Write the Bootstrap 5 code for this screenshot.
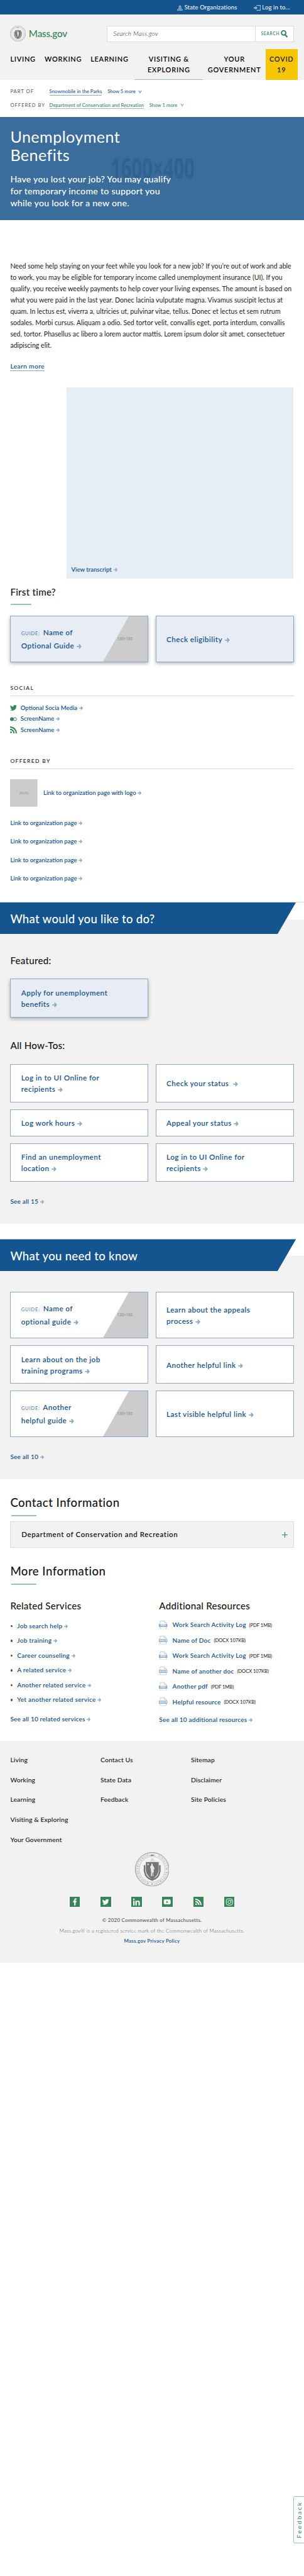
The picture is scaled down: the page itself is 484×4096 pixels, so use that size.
<!DOCTYPE html>
<html lang="en">
<head>
<meta charset="utf-8">
<meta name="viewport" content="width=device-width, initial-scale=1">
<title>Unemployment Benefits | Mass.gov</title>
<link href="https://cdn.jsdelivr.net/npm/bootstrap@5.3.0/dist/css/bootstrap.min.css" rel="stylesheet">
<style>
/* 1rem = 10 design units */
html{font-size:5.46px}
body{font-family:Lato,"Open Sans",sans-serif;font-size:1.8rem;color:#141414;background:#fff;min-height:100vh;position:relative;overflow-x:hidden}
a{color:#14558f;text-decoration:none}
ul{list-style:none;margin:0;padding:0}
h1,h2,h3,p{margin:0}
.page-pad{padding-left:3rem;padding-right:3rem}
.arr{width:1.5rem;height:1.4rem;fill:#8aaac8;margin-left:.65rem;vertical-align:-.05em}
.arr-sm{width:1.15rem;height:1.1rem;margin-left:.5rem;vertical-align:0}
.topbar{height:4.3rem;background:#14558f;color:#fff;gap:4.8rem;padding:.2rem 4.1rem 0 0;font-size:1.75rem;letter-spacing:.02rem}
.topbar svg{fill:#a1bbd2}
.masthead{height:19rem;background:#f2f2f2;padding-top:3.3rem}
.brand-row{height:4.6rem}
.brand-name{font-size:2.8rem;line-height:1;color:#388557;font-weight:500;margin-left:.8rem;letter-spacing:-.04rem}
.seal{width:4.6rem;height:4.6rem}
.finder{width:54.6rem;height:4.6rem;background:#fff;border:.2rem solid #dcdcdc}
.finder .hint{font-style:italic;font-size:1.85rem;padding-left:1.8rem;color:#141414;font-weight:300;letter-spacing:.04rem}
.finder .go{width:11.1rem;border-left:.2rem solid #dcdcdc;color:#388557;font-size:1.2rem;font-weight:600;letter-spacing:.143rem}
.mainnav{height:9rem;margin-top:2.1rem;padding-left:3rem;display:grid;grid-template-columns:10rem 13.4rem 12.8rem 20.1rem 18.1rem 9.4rem;font-size:2rem;line-height:3.1rem;font-weight:600;letter-spacing:.145rem;color:#000}
.mainnav li{padding-top:1.45rem;white-space:nowrap}
.mainnav .on{position:relative}
.mainnav .on::after{content:"";position:absolute;left:0;right:0;bottom:0;height:.3rem;background:#94bfa3;clip-path:polygon(.2rem 0,100% 0,99.2% 100%,0 100%)}
.mainnav .hot{background:#f6c600;color:#222}
.crumbs{height:10.8rem;padding-top:1.5rem;line-height:3.9rem;font-size:1.4rem;font-weight:500;letter-spacing:.01rem}
.crumbs .lab{width:11.4rem;color:#535353;font-weight:400;letter-spacing:.185rem}
.crumbs u{text-decoration:none;border-bottom:.15rem solid #8aaac8;padding-bottom:.05rem}
.crumbs .g,.crumbs .g a{color:#388557}
.crumbs .g u{border-color:#9ac4ab}
.crumbs .more{margin-left:1.6rem}
.crumbs svg{width:1.1rem;height:.9rem;margin-left:.8rem;fill:#8aaac8}
.crumbs .g svg{fill:#9ac4ab}
.hero{height:30rem;background:#3a6d9c;color:#fff;padding-top:3rem}
.hero h1{font-size:4.6rem;line-height:5.4rem;font-weight:400;position:relative;letter-spacing:.08rem}
.hero p{font-size:2.6rem;line-height:3.5rem;margin-top:2.4rem;font-weight:500;position:relative;letter-spacing:.043rem}
.ghost{position:absolute;left:32rem;top:11rem;width:25rem;height:8rem;overflow:visible}
.intro{font-size:1.95rem;line-height:3.3rem;margin-top:11.8rem;color:#222;white-space:nowrap}
.learn{font-size:1.9rem;line-height:2.6rem;border-bottom:.15rem solid #8aaac8;margin-top:3rem;font-weight:600;letter-spacing:.053rem}
.video{margin:4.8rem 0 0 16.5rem;width:66.1rem;height:55.7rem;background:#e6edf5;padding:0 0 1.6rem 1.3rem;font-size:1.75rem;line-height:2.4rem;font-weight:600}
.h-bar::after{content:"";display:block;height:.3rem;background:#9ac4ab;width:6rem;margin:1.47rem 0 0 .15rem;transform:skewX(-20deg)}
.h-sm{font-size:2.78rem;line-height:3.6rem;font-weight:500;letter-spacing:.045rem}
.h-lg{font-size:3.4rem;line-height:4.4rem;font-weight:500;letter-spacing:.09rem}
.h-lg.h-bar::after{width:7.4rem;margin-left:.3rem}
.tiles{display:grid;grid-template-columns:1fr 1fr;column-gap:2.1rem;row-gap:2rem}
.tile{border:.3rem solid #8aaac8;background:#fff;font-size:2.15rem;line-height:3.3rem;font-weight:600;padding:0 3rem;color:#14558f;position:relative;letter-spacing:.075rem}
.lift{background:#e7ecf5;box-shadow:0 .5rem 1rem rgba(0,0,0,.3)}
.guide{line-height:3.5rem;padding-right:15rem}
.guide small{font-size:1.4rem;font-weight:400;letter-spacing:.14rem;color:#4377a5;margin-right:.3rem}
.pic{position:absolute;right:0;top:0;bottom:0;width:13rem;height:100%}
.cap{font-size:1.55rem;line-height:2rem;letter-spacing:.25rem;font-weight:500;border-bottom:.25rem solid #dcdcdc;padding-bottom:1.15rem;margin-top:6.5rem}
.social{font-size:1.75rem;line-height:3.2rem;font-weight:600;padding-top:1.8rem}
.social .ico{width:2rem;height:2rem;fill:#388557;margin-right:1rem}
.orgs{font-size:1.75rem;line-height:5.4rem;font-weight:600;padding-top:2rem}
.logo-box{width:8rem;height:8rem}
.banded{background:linear-gradient(#fff 5rem,#f2f2f2 5rem)}
.ribbon{height:9.3rem;background:#14558f;color:#fff;clip-path:polygon(0 0,86.3rem 0,80.9rem 100%,0 100%);font-size:3.4rem;font-weight:500;padding-top:.3rem;letter-spacing:.055rem}
.seeall{font-size:1.85rem;line-height:2.4rem;font-weight:600;letter-spacing:.03rem}
.acc{height:7.7rem;border:.25rem solid #dcdcdc;background:#f2f2f2;font-size:2.1rem;font-weight:600;padding:0 1.6rem 0 3.1rem;margin-top:1.6rem;letter-spacing:.115rem}
.rel{font-size:1.85rem;line-height:4.3rem;font-weight:600;padding-top:1.8rem;letter-spacing:.043rem}
.rel li::before{content:"";width:.6rem;height:.6rem;border-radius:50%;background:#535353;margin:0 1.25rem 0 .15rem}
.res{font-size:1.85rem;line-height:4.5rem;font-weight:600;padding-top:1.3rem;letter-spacing:.038rem}
.res .ico{width:2.5rem;height:2.5rem;margin-right:1.4rem}
.res span{font-size:1.4rem;font-weight:400;margin-left:.9rem;position:relative;top:.1rem;color:#141414;letter-spacing:-.01rem}
.foot{background:#f2f2f2;height:64.6rem;margin-top:4.9rem;padding-top:2.7rem}
.foot .cols{display:grid;grid-template-columns:26.3rem 26.4rem 1fr;font-size:1.9rem;line-height:5.8rem;height:29.7rem;font-weight:500;letter-spacing:.022rem}
.foot .seal{width:10rem;height:10rem}
.sq{width:3rem;height:3rem;background:#388557;fill:#fff}
.legal{font-size:1.45rem;line-height:3.05rem;margin-top:2.3rem;color:#535353;font-weight:500;letter-spacing:.05rem}
.fb{position:absolute;right:-.3rem;top:726.9rem;width:3.4rem;height:13.8rem;border:.35rem solid #9ac4ab;border-radius:.4rem 0 0 .4rem;color:#388557;writing-mode:vertical-rl;font-size:1.8rem;letter-spacing:.41rem;background:#fff}
.fb span{transform:rotate(180deg)}
</style>
</head>
<body>
<svg class="d-none">
<symbol id="ar" viewBox="0 0 14 14"><path d="M0 5.300h7.500L5.300 1.800 7.600 0 14 7 7.600 14 5.300 12.200 7.500 8.700H0z"/></symbol>
<symbol id="chev" viewBox="0 0 12 10"><path d="M0 0h3.200L6 4.200 8.800 0H12L6 10z"/></symbol>
<symbol id="tw" viewBox="0 0 24 24"><path d="M24 4.600a10 10 0 0 1-2.800.800 5 5 0 0 0 2.200-2.700 10 10 0 0 1-3.100 1.200 4.900 4.900 0 0 0-8.400 4.500A14 14 0 0 1 1.700 3.200a4.900 4.900 0 0 0 1.500 6.600 5 5 0 0 1-2.200-.6 4.900 4.900 0 0 0 3.900 4.900 5 5 0 0 1-2.200.1 4.900 4.900 0 0 0 4.600 3.400A9.900 9.900 0 0 1 0 19.600 14 14 0 0 0 21.500 7.100 10 10 0 0 0 24 4.600z"/></symbol>
<symbol id="fl" viewBox="0 0 20 20"><circle cx="5.500" cy="10" r="5.500"/><circle cx="14.500" cy="10" r="4.600" fill="none" stroke="#388557" stroke-width="1.800"/></symbol>
<symbol id="rss" viewBox="0 0 20 20"><circle cx="2.800" cy="17.200" r="2.700"/><path d="M0 6.800v3.700A9.500 9.500 0 0 1 9.500 20h3.700A13.200 13.200 0 0 0 0 6.800zM0 0v3.800A16.200 16.200 0 0 1 16.200 20H20A20 20 0 0 0 0 0z"/></symbol>
<symbol id="seal" viewBox="0 0 100 100"><g fill="none" stroke="#767676"><circle cx="50" cy="50" r="49.300" stroke-width="1.200"/><circle cx="50" cy="50" r="47.300" stroke-width=".6"/><circle cx="50" cy="50" r="37.500" stroke-width="1.100" stroke-dasharray="1 .6"/></g><path id="ringt" d="M50 9.800A40.200 40.200 0 1 1 49.990 9.800" fill="none"/><text font-family="Liberation Serif" font-size="7.600" fill="#767676"><textPath href="#ringt" startOffset="17" textLength="228" lengthAdjust="spacing">SIGILLUM REIPUBLICÆ MASSACHUSETTENSIS.</textPath></text><path d="M41 8.500h5v-1h8v1h5v1h-5v1.200h-8V9.500h-5z" fill="#767676"/><path d="M31.500 29h37.500v22c0 12-9 23-19 28.500C40 74 31.500 63 31.500 51z" fill="#767676"/><path d="M27 38c3 8-2 14 2 22 1 8 8 17 21 21 13-4 20-13 21-21 4-8-1-14 2-22" fill="none" stroke="#767676" stroke-width="4.500"/><path d="M44 27l3-8 3-2 3 3 6 6z" fill="#d8d8d8"/><path d="M38 32l.9 2.300 2.500.1-2 1.600.7 2.400-2.100-1.400-2.100 1.400.7-2.400-2-1.600 2.500-.1zM48 33l3 1 1 5 4 6 1 4-2 1-1-2 1 9-2 3 1 10h-2l-1-11-1 1-1 10h-3l1-11-1-6v-8l-2 3v-5l3-4z" fill="#e9e9e9"/></symbol>
<symbol id="pdf" viewBox="0 0 25 25"><path d="M3.500 10V1h13l5 5v4M3.500 18v6h18v-6M16 1v5.500h5.500" fill="none" stroke="#8aaac8"/><path d="M0 9.500h25v9H0z" fill="#8aaac8"/><text x="4" y="17" font-family="Open Sans" font-weight="700" font-size="8.500" textLength="17" fill="#fff">PDF</text></symbol>
<symbol id="docx" viewBox="0 0 25 25"><path d="M3.500 10V1h13l5 5v4M3.500 18v6h18v-6M16 1v5.500h5.500" fill="none" stroke="#8aaac8"/><path d="M0 9.500h25v9H0z" fill="#8aaac8"/><text x="1.500" y="16.700" font-family="Open Sans" font-weight="700" font-size="7.500" textLength="22" lengthAdjust="spacingAndGlyphs" fill="#fff">DOCX</text></symbol>
</svg>

<div class="topbar d-flex justify-content-end align-items-center">
  <span class="d-flex align-items-center"><svg width="9" height="9" viewBox="0 0 16 16" class="me-2"><path d="M7.300 0h1.400v2C11 2.500 12 4 12 6H4c0-2 1-3.500 3.300-4zM3.500 7h9v1h-9zM4 8.500h2V11H4zm3 0h2V11H7zm3 0h2V11h-2zM0 11.500h16V13H0zM1 13h2v2h2v-2h2v2h2v-2h2v2h2v-2h2v2h1v1H0v-1h1z"/></svg>State Organizations</span>
  <span class="d-flex align-items-center"><svg width="11" height="9" viewBox="0 0 20 16" class="me-2"><path d="M0 6h5V2.500L11 8l-6 5.500V10H0zM8 0h12v16H8v-2h10V2H8z"/></svg>Log in to...</span>
</div>
<header class="masthead">
  <div class="brand-row page-pad d-flex justify-content-between align-items-center">
    <div class="d-flex align-items-center"><svg class="seal"><use href="#seal"/></svg><span class="brand-name">Mass.gov</span></div>
    <div class="finder d-flex align-items-stretch">
      <div class="hint flex-fill d-flex align-items-center">Search Mass.gov</div>
      <div class="go d-flex align-items-center justify-content-center">SEARCH<svg class="ms-1" width="11.500" height="11.500" viewBox="0 0 20 20" fill="none" stroke="#388557"><circle cx="8" cy="7.500" r="6" stroke-width="3.400"/><path d="M12 12.500l6 6.500" stroke-width="4"/></svg></div>
    </div>
  </div>
  <ul class="mainnav">
    <li>LIVING</li><li>WORKING</li><li>LEARNING</li>
    <li class="on text-center">VISITING &amp;<br>EXPLORING</li><li class="text-center">YOUR<br>GOVERNMENT</li><li class="hot text-center">COVID<br>19</li>
  </ul>
</header>
<div class="crumbs page-pad">
  <div class="d-flex"><span class="lab">PART OF</span><a href="#"><u>Snowmobile in the Parks</u></a><a href="#" class="more">Show 5 more<svg><use href="#chev"/></svg></a></div>
  <div class="d-flex g"><span class="lab">OFFERED BY</span><a href="#"><u>Department of Conservation and Recreation</u></a><a href="#" class="more">Show 1 more<svg><use href="#chev"/></svg></a></div>
</div>
<section class="hero page-pad position-relative">
  <svg class="ghost" viewBox="0 0 250 80"><text x="2" y="69" font-family="Open Sans" font-weight="700" font-size="81" textLength="245" lengthAdjust="spacingAndGlyphs" fill="#30628f">1600×400</text></svg>
  <h1>Unemployment<br>Benefits</h1>
  <p>Have you lost your job? You may qualify<br>for temporary income to support you<br>while you look for a new one.</p>
</section>
<main>
<div class="page-pad">
  <p class="intro">Need some help staying on your feet while you look for a new job? If you’re out of work and able<br>to work, you may be eligible for temporary income called unemployment insurance (UI). If you<br>qualify, you receive weekly payments to help cover your living expenses. The amount is based on<br>what you were paid in the last year. Donec lacinia vulputate magna. Vivamus suscipit lectus at<br>quam. In lectus est, viverra a, ultricies ut, pulvinar vitae, tellus. Donec et lectus et sem rutrum<br>sodales. Morbi cursus. Aliquam a odio. Sed tortor velit, convallis eget, porta interdum, convallis<br>sed, tortor. Phasellus ac libero a lorem auctor mattis. Lorem ipsum dolor sit amet, consectetuer<br>adipiscing elit.</p>
  <div class="d-flex"><a class="learn" href="#">Learn more</a></div>
  <div class="video d-flex align-items-end"><a href="#">View transcript<svg class="arr arr-sm"><use href="#ar"/></svg></a></div>
  <h2 class="h-sm h-bar" style="margin-top:2.2rem">First time?</h2>
  <div class="tiles" style="margin-top:3.2rem;grid-auto-rows:13.6rem">
    <a class="tile lift guide d-flex align-items-center" href="#"><div><small>GUIDE:</small> Name of<br>Optional Guide<svg class="arr"><use href="#ar"/></svg></div><svg class="pic" viewBox="0 0 130 130" preserveAspectRatio="none"><path d="M75 0h55v130H0z" fill="#ccc"/><text x="41" y="69" font-family="Open Sans" font-size="13" textLength="45" lengthAdjust="spacingAndGlyphs" fill="#969696">130×160</text></svg></a>
    <a class="tile lift d-flex align-items-center" href="#"><div>Check eligibility<svg class="arr"><use href="#ar"/></svg></div></a>
  </div>
  <h3 class="cap">SOCIAL</h3>
  <ul class="social">
    <li class="d-flex align-items-center"><svg class="ico"><use href="#tw"/></svg><a href="#">Optional Socia Media<svg class="arr arr-sm"><use href="#ar"/></svg></a></li>
    <li class="d-flex align-items-center"><svg class="ico"><use href="#fl"/></svg><a href="#">ScreenName<svg class="arr arr-sm"><use href="#ar"/></svg></a></li>
    <li class="d-flex align-items-center"><svg class="ico"><use href="#rss"/></svg><a href="#">ScreenName<svg class="arr arr-sm"><use href="#ar"/></svg></a></li>
  </ul>
  <h3 class="cap">OFFERED BY</h3>
  <div class="d-flex align-items-center social" style="padding-top:3rem"><svg class="logo-box" viewBox="0 0 80 80"><path d="M0 0h80v80H0z" fill="#ccc"/><text x="27" y="43.500" font-family="Open Sans" font-size="8.500" textLength="26" lengthAdjust="spacingAndGlyphs" fill="#969696">250×250</text></svg><a href="#" style="margin-left:1.65rem">Link to organization page with logo<svg class="arr arr-sm"><use href="#ar"/></svg></a></div>
  <ul class="orgs">
    <li><a href="#">Link to organization page<svg class="arr arr-sm"><use href="#ar"/></svg></a></li>
    <li><a href="#">Link to organization page<svg class="arr arr-sm"><use href="#ar"/></svg></a></li>
    <li><a href="#">Link to organization page<svg class="arr arr-sm"><use href="#ar"/></svg></a></li>
    <li><a href="#">Link to organization page<svg class="arr arr-sm"><use href="#ar"/></svg></a></li>
  </ul>
</div>
<section class="banded" style="margin-top:4rem;border-top:1px solid #dcdcdc">
  <h2 class="ribbon page-pad d-flex align-items-center">What would you like to do?</h2>
  <div class="page-pad">
    <h3 class="h-sm" style="margin-top:6rem">Featured:</h3>
    <div class="tiles" style="margin-top:3.4rem;grid-auto-rows:11.2rem"><a class="tile lift d-flex align-items-center" href="#"><div>Apply for unemployment<br>benefits<svg class="arr"><use href="#ar"/></svg></div></a></div>
    <h3 class="h-sm" style="margin-top:6.5rem">All How-Tos:</h3>
    <div class="tiles" style="margin-top:3.5rem;grid-template-rows:11.2rem 7.9rem 11.2rem">
      <a class="tile d-flex align-items-center" href="#"><div>Log in to UI Online for<br>recipients<svg class="arr"><use href="#ar"/></svg></div></a>
      <a class="tile d-flex align-items-center" href="#"><div>Check your status&nbsp;<svg class="arr"><use href="#ar"/></svg></div></a>
      <a class="tile d-flex align-items-center" href="#"><div>Log work hours<svg class="arr"><use href="#ar"/></svg></div></a>
      <a class="tile d-flex align-items-center" href="#"><div>Appeal your status<svg class="arr"><use href="#ar"/></svg></div></a>
      <a class="tile d-flex align-items-center" href="#"><div>Find an unemployment<br>location<svg class="arr"><use href="#ar"/></svg></div></a>
      <a class="tile d-flex align-items-center" href="#"><div>Log in to UI Online for<br>recipients<svg class="arr"><use href="#ar"/></svg></div></a>
    </div>
    <div class="seeall" style="padding:4.550rem 0 5.3rem"><a href="#">See all 15<svg class="arr arr-sm"><use href="#ar"/></svg></a></div>
  </div>
</section>
<section class="banded" style="margin-top:4.5rem">
  <h2 class="ribbon page-pad d-flex align-items-center">What you need to know</h2>
  <div class="page-pad">
    <div class="tiles" style="margin-top:6rem;grid-template-rows:13.6rem 11.2rem 13.6rem">
      <a class="tile guide d-flex align-items-center" href="#"><div><small>GUIDE:</small> Name of<br>optional guide<svg class="arr"><use href="#ar"/></svg></div><svg class="pic" viewBox="0 0 130 130" preserveAspectRatio="none"><path d="M75 0h55v130H0z" fill="#ccc"/><text x="41" y="69" font-family="Open Sans" font-size="13" textLength="45" lengthAdjust="spacingAndGlyphs" fill="#969696">130×160</text></svg></a>
      <a class="tile d-flex align-items-center" href="#"><div>Learn about the appeals<br>process<svg class="arr"><use href="#ar"/></svg></div></a>
      <a class="tile d-flex align-items-center" href="#"><div>Learn about on the job<br>training programs<svg class="arr"><use href="#ar"/></svg></div></a>
      <a class="tile d-flex align-items-center" href="#"><div>Another helpful link<svg class="arr"><use href="#ar"/></svg></div></a>
      <a class="tile guide d-flex align-items-center" href="#"><div><small>GUIDE:</small> Another<br>helpful guide<svg class="arr"><use href="#ar"/></svg></div><svg class="pic" viewBox="0 0 130 130" preserveAspectRatio="none"><path d="M75 0h55v130H0z" fill="#ccc"/><text x="41" y="69" font-family="Open Sans" font-size="13" textLength="45" lengthAdjust="spacingAndGlyphs" fill="#969696">130×160</text></svg></a>
      <a class="tile d-flex align-items-center" href="#"><div>Last visible helpful link<svg class="arr"><use href="#ar"/></svg></div></a>
    </div>
    <div class="seeall" style="padding:4.5rem 0 5.3rem"><a href="#">See all 10<svg class="arr arr-sm"><use href="#ar"/></svg></a></div>
  </div>
</section>
<div class="page-pad">
  <h2 class="h-lg h-bar" style="margin-top:4.5rem">Contact Information</h2>
  <div class="acc d-flex align-items-center justify-content-between">Department of Conservation and Recreation<svg width="9" height="9" viewBox="0 0 16 16"><path d="M7 0h2v7h7v2H9v7H7V9H0V7h7z" fill="#388557"/></svg></div>
  <h2 class="h-lg h-bar" style="margin-top:4.6rem">More Information</h2>
  <div class="d-flex" style="margin-top:4.5rem">
    <div style="width:43.4rem"><h3 class="h-sm">Related Services</h3>
      <ul class="rel">
        <li class="d-flex align-items-center"><a href="#">Job search help<svg class="arr arr-sm"><use href="#ar"/></svg></a></li>
        <li class="d-flex align-items-center"><a href="#">Job training<svg class="arr arr-sm"><use href="#ar"/></svg></a></li>
        <li class="d-flex align-items-center"><a href="#">Career counseling<svg class="arr arr-sm"><use href="#ar"/></svg></a></li>
        <li class="d-flex align-items-center"><a href="#">A related service<svg class="arr arr-sm"><use href="#ar"/></svg></a></li>
        <li class="d-flex align-items-center"><a href="#">Another related service<svg class="arr arr-sm"><use href="#ar"/></svg></a></li>
        <li class="d-flex align-items-center"><a href="#">Yet another related service<svg class="arr arr-sm"><use href="#ar"/></svg></a></li>
      </ul>
      <div class="seeall" style="margin-top:2.2rem"><a href="#">See all 10 related services<svg class="arr arr-sm"><use href="#ar"/></svg></a></div>
    </div>
    <div><h3 class="h-sm">Additional Resources</h3>
      <ul class="res">
        <li class="d-flex align-items-center"><svg class="ico"><use href="#pdf"/></svg><a href="#">Work Search Activity Log</a><span>(PDF 1MB)</span></li>
        <li class="d-flex align-items-center"><svg class="ico"><use href="#docx"/></svg><a href="#">Name of Doc</a><span>(DOCX 107KB)</span></li>
        <li class="d-flex align-items-center"><svg class="ico"><use href="#pdf"/></svg><a href="#">Work Search Activity Log</a><span>(PDF 1MB)</span></li>
        <li class="d-flex align-items-center"><svg class="ico"><use href="#docx"/></svg><a href="#">Name of another doc</a><span>(DOCX 107KB)</span></li>
        <li class="d-flex align-items-center"><svg class="ico"><use href="#pdf"/></svg><a href="#">Another pdf</a><span>(PDF 1MB)</span></li>
        <li class="d-flex align-items-center"><svg class="ico"><use href="#docx"/></svg><a href="#">Helpful resource</a><span>(DOCX 107KB)</span></li>
      </ul>
      <div class="seeall" style="margin-top:1.8rem"><a href="#">See all 10 additional resources<svg class="arr arr-sm"><use href="#ar"/></svg></a></div>
    </div>
  </div>
</div>
</main>
<footer class="foot text-center">
  <div class="cols page-pad text-start">
    <ul><li>Living</li><li>Working</li><li>Learning</li><li>Visiting &amp; Exploring</li><li>Your Government</li></ul>
    <ul><li>Contact Us</li><li>State Data</li><li>Feedback</li></ul>
    <ul><li>Sitemap</li><li>Disclaimer</li><li>Site Policies</li></ul>
  </div>
  <svg class="seal d-block mx-auto"><use href="#seal"/></svg>
  <div class="d-flex justify-content-center" style="gap:6rem;margin-top:3rem">
    <svg class="sq" viewBox="0 0 30 30"><path d="M13 25v-9h-3v-4h3V9c0-3 2-4.500 4.500-4.500H20V8h-1.500C17.200 8 17 8.700 17 9.500V12h3l-.5 4H17v9z"/></svg>
    <svg class="sq" viewBox="0 0 30 30"><use href="#tw" x="5" y="5" width="20" height="20"/></svg>
    <svg class="sq" viewBox="0 0 30 30"><circle cx="7.500" cy="7.500" r="2.400"/><path d="M5.500 11.500h4V25h-4zM12 11.500h4v1.800c2-3.200 9-3.200 9 3.200V25h-4v-7.500c0-3.500-5-3.500-5 0V25h-4z"/></svg>
    <svg class="sq" viewBox="0 0 30 30"><path fill-rule="evenodd" d="M8 8h14q3 0 3 3v8q0 3-3 3H8q-3 0-3-3v-8q0-3 3-3zm4.500 3.700v7L18.500 15z"/></svg>
    <svg class="sq" viewBox="0 0 30 30"><use href="#rss" x="5" y="5.500" width="19" height="19"/></svg>
    <svg class="sq" viewBox="0 0 30 30"><g fill="none" stroke="#fff" stroke-width="1.800"><rect x="6" y="6" width="18" height="18" rx="5"/><circle cx="15" cy="15" r="4.500"/></g><circle cx="20" cy="10" r="1.300"/></svg>
  </div>
  <div class="legal"><div>© 2020 Commonwealth of Massachusetts.</div><div class="fw-light">Mass.gov® is a registered service mark of the Commonwealth of Massachusetts.</div><div><a href="#" class="fw-semibold">Mass.gov Privacy Policy</a></div></div>
</footer>
<div class="fb d-flex align-items-center justify-content-center"><span>Feedback</span></div>
<script src="https://cdn.jsdelivr.net/npm/bootstrap@5.3.0/dist/js/bootstrap.bundle.min.js"></script>
</body>
</html>
